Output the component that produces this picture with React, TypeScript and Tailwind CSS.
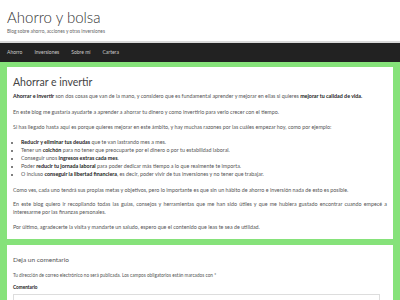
const font = { fontFamily: 'Lato, "Noto Sans", sans-serif' };

const menu = ['Ahorro', 'Inversiones', 'Sobre mí', 'Cartera'];

function B({ children }: { children: React.ReactNode }) {
  return <strong className="font-bold text-[#222]">{children}</strong>;
}

export default function App() {
  return (
    <div className="w-[400px] h-[300px] overflow-hidden bg-[#86e27a]" style={font}>
      <header className="bg-white px-[7px] pt-[8px] pb-[7px] border-b-2 border-[#d9d9d9]">
        <h1 className="text-[15px] leading-[18px] text-[#333] font-light">Ahorro y bolsa</h1>
        <p className="text-[4.8px] leading-[6px] text-[#666] mt-[2px]">Blog sobre ahorro, acciones y otras inversiones</p>
      </header>

      <nav className="bg-[#222] h-[19px] flex items-center gap-[12px] px-[7px] text-[5px] text-[#ccc]">
        {menu.map(m => <span key={m}>{m}</span>)}
      </nav>

      <div className="px-[7px] pt-[5px]">
        <article className="bg-white px-[6px] pt-[8px] pb-[8px] text-[5.35px] leading-[8px] text-[#555]">
          <h2 className="text-[10.5px] leading-[14px] text-[#444] mb-[3px]">Ahorrar e invertir</h2>
          <p className="mb-[8px]"><B>Ahorrar e invertir</B> son dos cosas que van de la mano, y considero que es fundamental aprender y mejorar en ellas si quieres <B>mejorar tu calidad de vida.</B></p>
          <p className="mb-[7px]">En este blog me gustaría ayudarte a aprender a ahorrar tu dinero y como invertirlo para verlo crecer con el tiempo.</p>
          <p className="mb-[7px]">Si has llegado hasta aquí es porque quieres mejorar en este ámbito, y hay muchas razones por las cuáles empezar hoy, como por ejemplo:</p>
          <ul className="list-disc pl-[8px] mb-[8px]">
            <li><B>Reducir y eliminar tus deudas</B> que te van lastrando mes a mes.</li>
            <li>Tener un <B>colchón</B> para no tener que preocuparte por el dinero o por tu estabilidad laboral.</li>
            <li>Conseguir unos <B>ingresos extras cada mes</B>.</li>
            <li>Poder <B>reducir tu jornada laboral</B> para poder dedicar más tiempo a lo que realmente te importa.</li>
            <li>O incluso <B>conseguir la libertad financiera</B>, es decir, poder vivir de tus inversiones y no tener que trabajar.</li>
          </ul>
          <p className="mb-[6px]">Como ves, cada uno tendrá sus propias metas y objetivos, pero lo importante es que sin un hábito de ahorro e inversión nada de esto es posible.</p>
          <p className="mb-[7px] text-justify">En este blog quiero ir recopilando todas las guías, consejos y herramientas que me han sido útiles y que me hubiera gustado encontrar cuando empecé a interesarme por las finanzas personales.</p>
          <p>Por último, agradecerte la visita y mandarte un saludo, espero que el contenido que leas te sea de utilidad.</p>
        </article>

        <section className="bg-white mt-[6px] px-[6px] pt-[10px] pb-[20px] text-[5px] leading-[8px] text-[#555]">
          <h3 className="text-[6.5px] leading-[10px] text-[#555] mb-[6px]">Deja un comentario</h3>
          <p className="text-[4.7px] mb-[4px]">Tu dirección de correo electrónico no será publicada. Los campos obligatorios están marcados con *</p>
          <label className="block font-bold text-[#222] text-[4.7px] mb-[3px]">Comentario</label>
          <div className="h-[40px] border border-[#ddd] mr-[7px]" />
        </section>
      </div>
    </div>
  );
}
